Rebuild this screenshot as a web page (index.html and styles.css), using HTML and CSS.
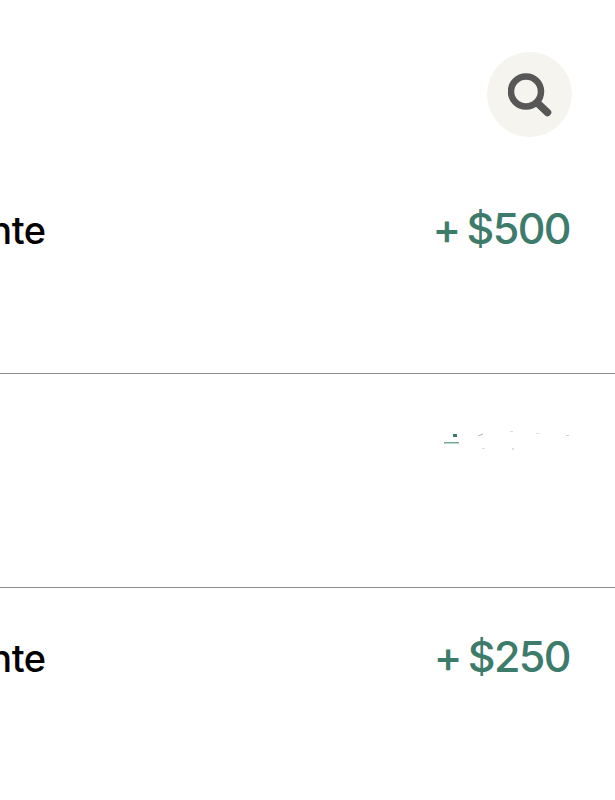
FILE: index.html
```html
<!DOCTYPE html>
<html lang="es">
<head>
    <meta charset="UTF-8">
    <meta name="viewport" content="width=device-width, initial-scale=1.0">
    <title>Movimientos</title>
    <link rel="stylesheet" href="styles.css">
</head>
<body>
    <div class="container">
        <header class="top-bar">
            <button class="search-button" aria-label="Buscar">
                <svg class="search-icon" viewBox="0 0 44 44" fill="none" xmlns="http://www.w3.org/2000/svg">
                    <circle cx="18" cy="18.500" r="15" stroke="currentColor" stroke-width="6.500"/>
                    <path d="M30 30.500L39.500 39.500" stroke="currentColor" stroke-width="7.500" stroke-linecap="round"/>
                </svg>
            </button>
        </header>

        <ul class="movements">
            <li class="movement">
                <span class="movement-name">Cliente</span>
                <span class="movement-amount">+ $500</span>
            </li>
            <li class="movement movement-blank">
                <!-- restos del texto que no llegó a pintarse -->
                <svg class="specks" viewBox="0 0 130 30" xmlns="http://www.w3.org/2000/svg">
                    <rect x="10" y="3" width="4" height="3" fill="#3a7a6a"/>
                    <rect x="1" y="11" width="15" height="1.500" fill="#7aa79b"/>
                    <path d="M35 5L40 3" stroke="#9fbdb5" stroke-width="1"/>
                    <rect x="67" y="0" width="3" height="1" fill="#d5e2de"/>
                    <rect x="93" y="2" width="3" height="1" fill="#d5e2de"/>
                    <rect x="123" y="4" width="3" height="1" fill="#c5d7d2"/>
                    <rect x="39" y="17" width="3" height="1" fill="#d5e2de"/>
                    <rect x="69" y="17" width="2" height="2" fill="#d5e2de"/>
                </svg>
            </li>
            <li class="movement">
                <span class="movement-name">Cliente</span>
                <span class="movement-amount">+ $250</span>
            </li>
        </ul>
    </div>
</body>
</html>
```

FILE: styles.css
```css
html, body {
    margin: 0;
    padding: 0;
    background-color: #fff;
}
body {
    font-family: 'Inter', 'Liberation Sans', Arial, sans-serif;
    overflow: hidden;
}
.container {
    width: 615px;
    height: 800px;
    overflow: hidden;
}
.top-bar {
    display: flex;
    justify-content: flex-end;
    height: 160px;
    padding: 52px 43px 0 0;
    box-sizing: border-box;
}
.search-button {
    display: flex;
    align-items: center;
    justify-content: center;
    width: 85px;
    height: 85px;
    padding: 0;
    border: none;
    border-radius: 50%;
    background-color: #f5f4ef;
    color: #575757;
}
.search-icon {
    width: 44px;
    height: 44px;
}
.movements {
    list-style: none;
    margin: 0;
    padding: 0;
}
.movement {
    display: flex;
    justify-content: space-between;
    height: 214px;
    padding: 45px 45px 0 0;
    box-sizing: border-box;
    border-bottom: 1px solid #8c8c8c;
}
.movement:last-child {
    border-bottom: none;
}
.movement-blank {
    justify-content: flex-end;
    padding-top: 57px;
    padding-right: 42px;
}
.movement-name {
    margin-left: -78px;
    font-size: 38px;
    font-weight: 500;
    letter-spacing: -0.5px;
    line-height: 50px;
    color: #000;
}
.movement-amount {
    margin-top: -1px;
    font-size: 43px;
    font-weight: 450;
    letter-spacing: -1.6px;
    word-spacing: -3px;
    line-height: 48px;
    color: #3d7b6b;
}
.specks {
    width: 130px;
    height: 30px;
}
```
